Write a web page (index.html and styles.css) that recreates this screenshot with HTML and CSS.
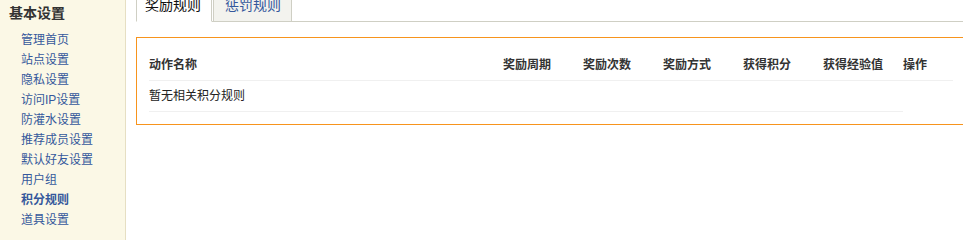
FILE: index.html
```html
<!DOCTYPE html>
<html lang="zh-CN">
<head>
<meta charset="utf-8">
<title>积分规则</title>
<link rel="stylesheet" href="styles.css">
</head>
<body>
<div class="layout">
  <aside class="sidebar">
    <h3 class="side-title">基本设置</h3>
    <ul class="side-menu">
      <li><a href="#">管理首页</a></li>
      <li><a href="#">站点设置</a></li>
      <li><a href="#">隐私设置</a></li>
      <li><a href="#">访问IP设置</a></li>
      <li><a href="#">防灌水设置</a></li>
      <li><a href="#">推荐成员设置</a></li>
      <li><a href="#">默认好友设置</a></li>
      <li><a href="#">用户组</a></li>
      <li><a href="#" class="current">积分规则</a></li>
      <li><a href="#">道具设置</a></li>
    </ul>
  </aside>
  <main class="main">
    <ul class="tabs">
      <li class="tab active">奖励规则</li>
      <li class="tab"><a href="#">惩罚规则</a></li>
    </ul>
    <div class="box">
      <table class="rules">
        <colgroup>
          <col class="c-name"><col class="c-num"><col class="c-num"><col class="c-num"><col class="c-num"><col class="c-num"><col class="c-op">
        </colgroup>
        <thead>
          <tr>
            <th>动作名称</th>
            <th>奖励周期</th>
            <th>奖励次数</th>
            <th>奖励方式</th>
            <th>获得积分</th>
            <th>获得经验值</th>
            <th>操作</th>
          </tr>
        </thead>
        <tbody>
          <tr>
            <td colspan="6">暂无相关积分规则</td>
          </tr>
        </tbody>
      </table>
    </div>
  </main>
</div>
</body>
</html>
```

FILE: styles.css
```css
html, body {
  margin: 0;
  padding: 0;
  height: 100%;
  overflow: hidden;
  background: #fff;
}

body {
  font-family: "Liberation Sans", "Noto Sans CJK SC", sans-serif;
  font-size: 12px;
  color: #333;
}

.layout {
  display: flex;
  height: 100vh;
}

.sidebar {
  width: 125px;
  flex: 0 0 125px;
  background: #fbf8e6;
  border-right: 1px solid #e6dfc3;
}

.side-title {
  margin: 3px 0 0 9px;
  font-size: 14px;
  line-height: 20px;
  font-weight: bold;
  color: #333;
}

.side-menu {
  list-style: none;
  margin: 7px 0 0;
  padding: 0 0 0 21px;
}

.side-menu li {
  line-height: 20px;
  height: 20px;
}

.side-menu a {
  color: #35589c;
  text-decoration: none;
}

.side-menu a.current {
  font-weight: bold;
}

.main {
  flex: 1;
  min-width: 0;
  padding-left: 10px;
  overflow: hidden;
}

.tabs {
  list-style: none;
  margin: -7px 0 0;
  padding: 0;
  display: flex;
  border-bottom: 1px solid #cfcfc4;
}

.tab {
  font-size: 14px;
  line-height: 22px;
  padding: 0 9px 5px;
  margin-bottom: -1px;
  margin-right: 1px;
  border: 1px solid #cfcfc4;
  background: #f3f3ee;
}

.tab a {
  color: #35589c;
  text-decoration: none;
}

.tab:nth-child(2) {
  padding: 0 10px 5px 11px;
}

.tab.active {
  background: #fff;
  border-bottom-color: #fff;
  color: #111;
  padding: 0 10px 5px 8px;
}

.box {
  margin-top: 15px;
  margin-right: -3px;
  border: 1px solid #f7941d;
  border-right: 0;
  padding: 12px 15px 12px 12px;
}

.rules {
  width: 804px;
  table-layout: fixed;
  border-collapse: collapse;
}

.c-name { width: 354px; }
.c-num { width: 80px; }
.c-op { width: 50px; }

.rules th,
.rules td {
  padding: 0;
  height: 30px;
  line-height: 30px;
  text-align: left;
  white-space: nowrap;
  border-bottom: 1px solid #f0f0f0;
}

.rules th {
  font-weight: bold;
  color: #333;
}

.rules td {
  color: #222;
}
```
